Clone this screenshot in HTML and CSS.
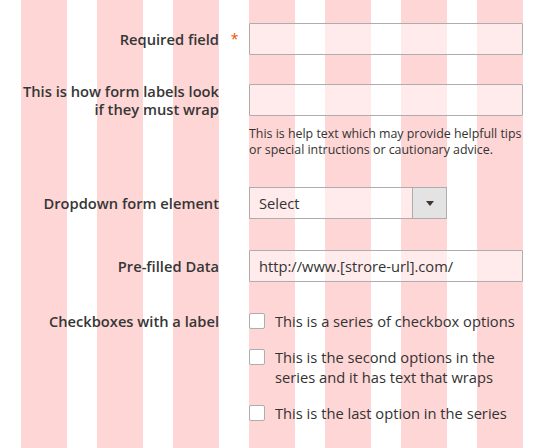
FILE: index.html
```html
<!DOCTYPE html>
<html>
<head>
<meta charset="utf-8">
<link rel="stylesheet" href="styles.css">
</head>
<body>
<div class="page">
  <form class="form">
    <div class="field">
      <label class="field-label">Required field</label>
      <span class="required-mark">*</span>
      <div class="field-control"><input class="input" type="text"></div>
    </div>

    <div class="field">
      <label class="field-label">This is how form labels look if they must wrap</label>
      <div class="field-control"><input class="input" type="text"></div>
      <div class="field-note">This is help text which may provide helpfull tips or special intructions or cautionary advice.</div>
    </div>

    <div class="field field--select">
      <label class="field-label">Dropdown form element</label>
      <div class="field-control">
        <div class="select">
          <span class="select-value">Select</span>
          <span class="select-btn"><i class="caret"></i></span>
        </div>
      </div>
    </div>

    <div class="field">
      <label class="field-label">Pre-filled Data</label>
      <div class="field-control"><input class="input" type="text" value="http://www.[strore-url].com/"></div>
    </div>

    <div class="field field--choices">
      <label class="field-label">Checkboxes with a label</label>
      <div class="choice"><span class="checkbox"></span><span class="choice-text">This is a series of checkbox options</span></div>
      <div class="choice"><span class="checkbox"></span><span class="choice-text">This is the second options in the series and it has text that wraps</span></div>
      <div class="choice"><span class="checkbox"></span><span class="choice-text">This is the last option in the series</span></div>
    </div>
  </form>
</div>
</body>
</html>
```

FILE: styles.css
```css
html, body {
  margin: 0;
  padding: 0;
  background: #fff;
}

body {
  font-family: "Open Sans", "Liberation Sans", sans-serif;
  color: #333;
  font-size: 14.7px;
}

.page {
  margin-left: 21px;
  width: 502px;
  min-height: 448px;
  box-sizing: border-box;
  padding-top: 23px;
  background: repeating-linear-gradient(90deg, #ffd6d6 0 46px, #ffffff 46px 76px);
}

.form {
  margin: 0;
}

.field {
  display: grid;
  grid-template-columns: 198px 30px 274px;
  grid-template-rows: 32px;
  grid-auto-rows: auto;
  align-items: center;
  margin-bottom: 29px;
}

.field--select {
  margin-bottom: 31px;
}

.field-label {
  grid-column: 1;
  grid-row: 1;
  text-align: right;
  font-weight: 600;
  line-height: 18px;
  color: #363636;
}

.required-mark {
  grid-column: 2;
  grid-row: 1;
  text-align: center;
  color: #eb5202;
  font-size: 14px;
  line-height: 18px;
  padding-left: 1px;
}

.field-control {
  grid-column: 3;
  grid-row: 1;
}

.input {
  display: block;
  box-sizing: border-box;
  width: 274px;
  height: 32px;
  margin: 0;
  padding: 0 9px;
  border: 1px solid #adadad;
  border-radius: 1px;
  background: rgba(255, 255, 255, 0.5);
  font-family: inherit;
  font-size: 14.7px;
  color: #333;
  outline: none;
}

.field-note {
  grid-column: 3;
  grid-row: 2;
  margin-top: 10px;
  font-size: 12.4px;
  line-height: 16px;
}

.select {
  display: flex;
  box-sizing: border-box;
  width: 198px;
  height: 32px;
  border: 1px solid #adadad;
  background: rgba(255, 255, 255, 0.5);
}

.select-value {
  flex: 1;
  padding-left: 9px;
  line-height: 30px;
}

.select-btn {
  width: 33px;
  border-left: 1px solid #adadad;
  background: #e3e3e3;
  display: flex;
  align-items: center;
  justify-content: center;
}

.caret {
  width: 0;
  height: 0;
  border-left: 4px solid transparent;
  border-right: 4px solid transparent;
  border-top: 5px solid #41362f;
}

.field--choices {
  grid-template-rows: auto;
  align-items: start;
  row-gap: 16px;
}

.field--choices .field-label {
  line-height: 20px;
}

.choice {
  grid-column: 3;
  display: flex;
  align-items: flex-start;
  line-height: 20px;
}

.checkbox {
  flex: none;
  box-sizing: border-box;
  width: 16px;
  height: 16px;
  margin-top: 2px;
  margin-right: 10px;
  border: 1px solid #adadad;
  border-radius: 2px;
  background: #fff;
}

.choice-text {
  flex: 1;
}
```
